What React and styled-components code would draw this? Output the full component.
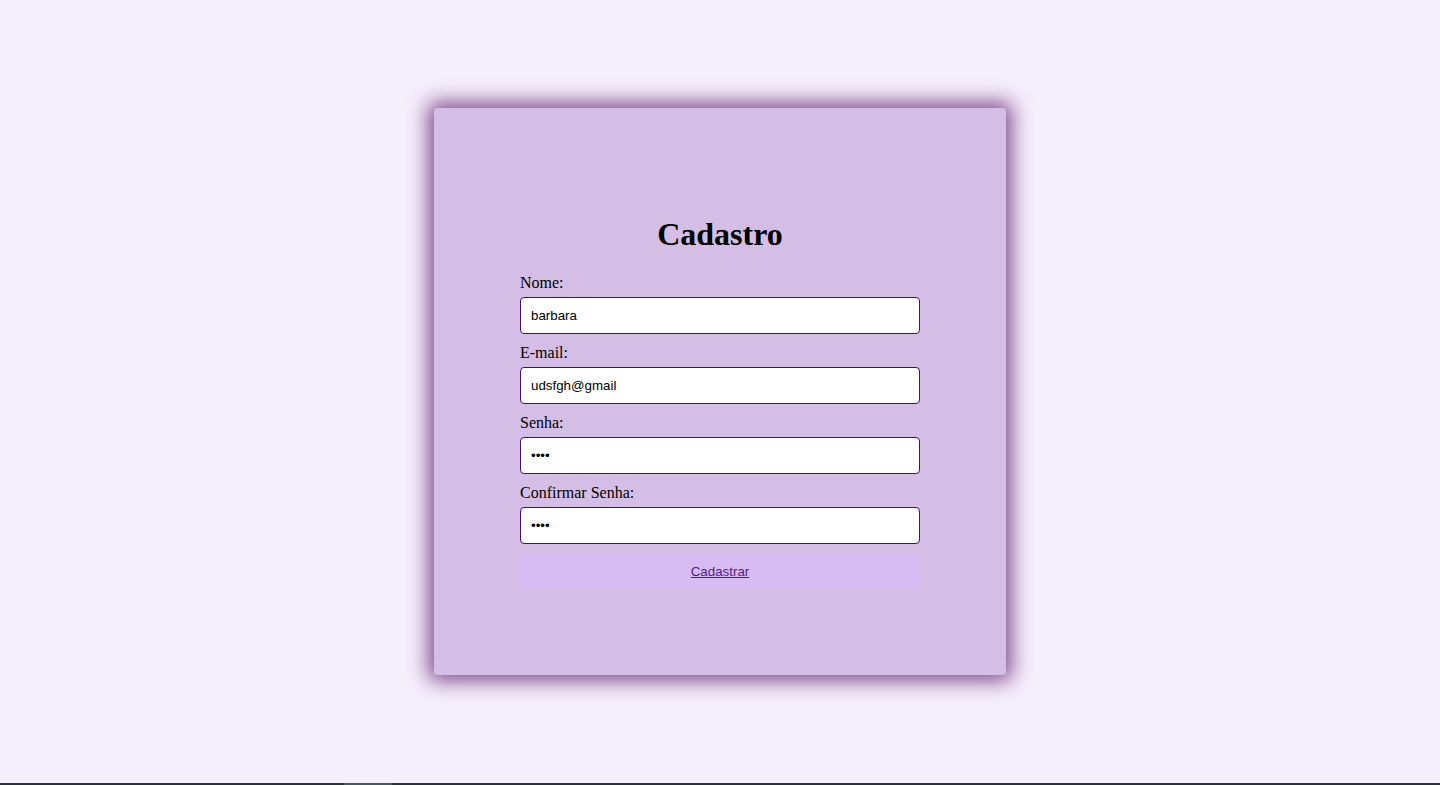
import styled, { createGlobalStyle } from 'styled-components';

const GlobalStyle = createGlobalStyle`
  html, body {
    margin: 0;
    padding: 0;
    background: #f5eefb;
    font-family: "Liberation Serif", "Times New Roman", serif;
  }
`;

function App() {
  return (
    <Page>
      <GlobalStyle />
      <Main>
        <Card>
          <Form onSubmit={(e) => e.preventDefault()}>
            <Title>Cadastro</Title>
            <Label htmlFor="nome">Nome:</Label>
            <Input id="nome" type="text" defaultValue="barbara" />
            <Label htmlFor="email">E-mail:</Label>
            <Input id="email" type="text" defaultValue="udsfgh@gmail" />
            <Label htmlFor="senha">Senha:</Label>
            <Input id="senha" type="password" defaultValue="1234" />
            <Label htmlFor="confirmar">Confirmar Senha:</Label>
            <Input id="confirmar" type="password" defaultValue="1234" />
            <Button type="submit">
              <ButtonLink href="#">Cadastrar</ButtonLink>
            </Button>
          </Form>
        </Card>
      </Main>
      <BottomBar>
        <BarThumb />
      </BottomBar>
    </Page>
  );
}

const Page = styled.div`
  min-height: 100vh;
  display: flex;
  flex-direction: column;
`;

const Main = styled.main`
  flex: 1;
  display: flex;
  align-items: center;
  justify-content: center;
`;

const Card = styled.div`
  width: 572px;
  height: 567px;
  background: #d4bee6;
  border-radius: 3px;
  box-shadow: 0 0 20px 6px rgba(100, 40, 120, 0.8);
  display: flex;
  align-items: center;
  justify-content: center;
`;

const Form = styled.form`
  width: 400px;
  display: flex;
  flex-direction: column;
`;

const Title = styled.h1`
  margin: 0.67em 0;
  font-size: 32px;
  font-weight: bold;
  text-align: center;
  color: #000;
`;

const Label = styled.label`
  display: block;
  font-size: 16px;
  line-height: 18px;
  margin-bottom: 5px;
  color: #000;
`;

const Input = styled.input`
  box-sizing: border-box;
  width: 100%;
  height: 37px;
  padding: 10px;
  margin: 0 0 10px;
  border: 1px solid #4a0c6e;
  border-radius: 4px;
  background: #fff;
  font-family: "Liberation Sans", Arial, sans-serif;
  font-size: 13.33px;
  color: #000;
  outline: none;
`;

const Button = styled.button`
  width: 100%;
  height: 35px;
  padding: 10px;
  border: none;
  background: #d8bbf2;
  cursor: pointer;
  font-family: "Liberation Sans", Arial, sans-serif;
  font-size: 13.33px;
`;

const ButtonLink = styled.a`
  color: #551a8b;
  text-decoration: underline;
`;

const BottomBar = styled.div`
  height: 2px;
  background: #263238;
  display: flex;
`;

const BarThumb = styled.div`
  margin-left: 344px;
  width: 48px;
  background: #455a5e;
`;

export default App;
